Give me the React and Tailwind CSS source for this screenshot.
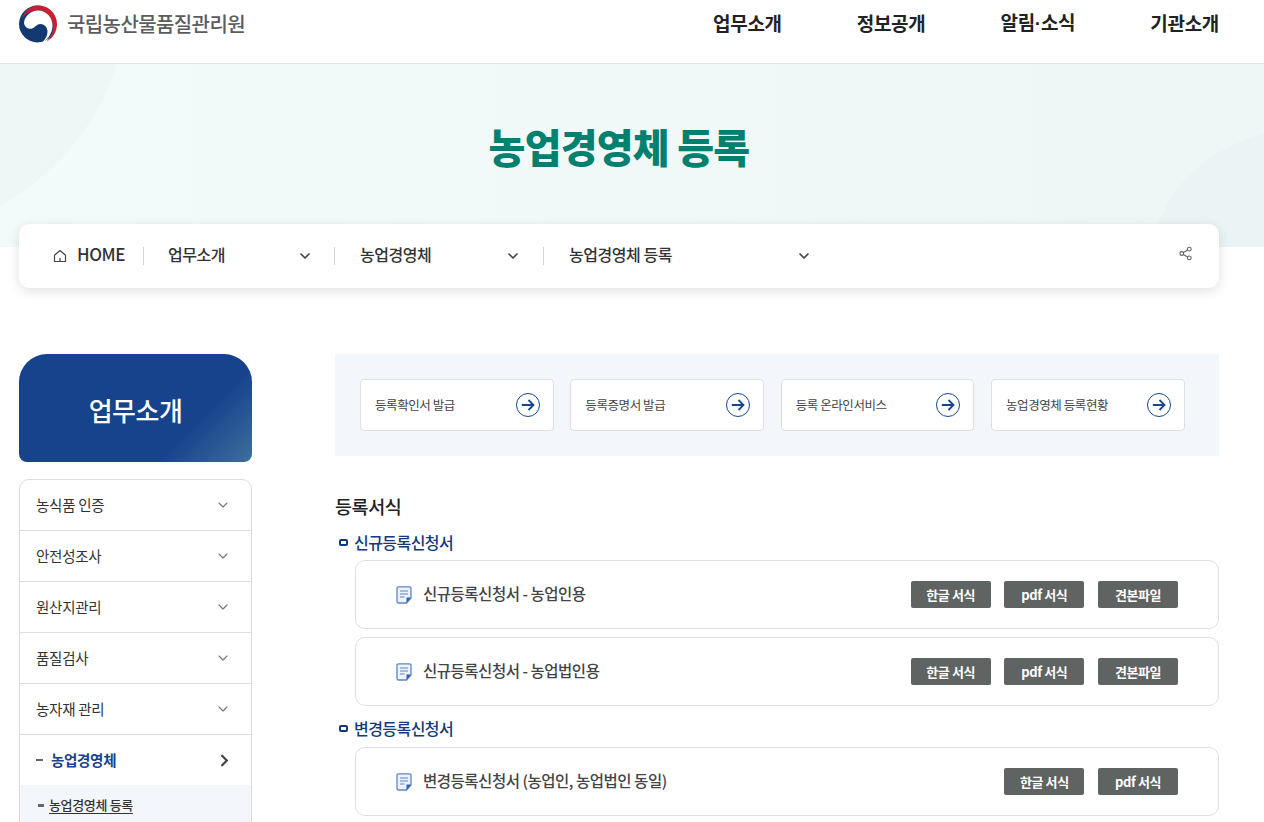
import React from "react";
import { ChevronDown, ChevronRight, Share2 } from "lucide-react";

function Logo() {
  return (
    <svg width="38" height="38" viewBox="0 0 38 38" className="shrink-0">
      <circle cx="18.500" cy="19" r="18.500" fill="#123a70" />
      <path d="M3 14C5 6 11.500.5 19.500.5 30 .5 38 9 38 19c0 8-4.500 14.500-11 18 4.500-4 7-9 7-14.500C34 13 27.500 5.500 18.500 5.500 11.500 5.500 5.500 9 3 14z" fill="#c8202f" />
      <path d="M5 17.500C6 10.500 12 5.500 19 5.500c8.500 0 14.500 7 14.500 15 0 6-3 11.500-7.500 15.500-.5.300-1.500.800-2.500 1 3-2.500 5-6.500 5-10.500 0-4.500-3.500-7.500-7-7.500-3 0-4.500 2-6.500 3.500-2.500 2-6 1.500-8-.5-1.200-1.300-2-2.700-2-4.500z" fill="#fff" />
    </svg>
  );
}

function HomeIcon() {
  return (
    <svg width="14" height="14" viewBox="0 0 14 14" fill="none" stroke="#444" strokeWidth="1.200" strokeLinejoin="round">
      <path d="M1.500 6.200 7 1.500l5.500 4.700v6.300h-11z" />
      <path d="M7 9v3.500" />
    </svg>
  );
}

function ArrowCircle() {
  return (
    <svg width="24" height="24" viewBox="0 0 24 24" fill="none" stroke="#17458c" className="shrink-0">
      <circle cx="12" cy="12" r="11.500" strokeWidth="1" />
      <path d="M5.800 12h11.700M12.500 7l5 5-5 5" strokeWidth="1.800" />
    </svg>
  );
}

function DocIcon() {
  return (
    <svg width="16" height="18" viewBox="0 0 16 18" fill="none" className="shrink-0">
      <path d="M2.500.8h11a1.500 1.500 0 0 1 1.500 1.500V12l-4.500 5h-8A1.500 1.500 0 0 1 1 15.500V2.300A1.500 1.500 0 0 1 2.500.8z" fill="#eef3fb" stroke="#5d86c9" strokeWidth="1.300" />
      <path d="M4 5h8M4 8h8M4 11h4.500" stroke="#5d86c9" strokeWidth="1.100" />
      <path d="M15 11.500h-4.500V17z" fill="#2f5fae" />
    </svg>
  );
}

function Crumb({ label, width, pad, right }) {
  return (
    <div className="flex items-center">
      <span className="w-px h-[18px] bg-[#d5d5d5]" />
      <div className="flex items-center justify-between text-[16px] font-medium text-[#333] tracking-[-0.45px]" style={{ width, paddingLeft: pad, paddingRight: right }}>
        <span className="-mt-[4px]">{label}</span>
        <ChevronDown size={16} strokeWidth={2.500} className="text-[#444]" />
      </div>
    </div>
  );
}

function QuickLink({ label }) {
  return (
    <a className="flex-1 h-[52px] flex items-center justify-between pl-[14px] pr-[13px] bg-white border border-[#e0e0e0] rounded-[4px] text-[12.500px] text-[#444] tracking-[-0.42px]">
      <span>{label}</span>
      <ArrowCircle />
    </a>
  );
}

function SideItem({ label }) {
  return (
    <div className="h-[51px] flex items-center justify-between pl-[16px] pr-[20px] border-b border-[#dddddd] text-[14.500px] text-[#333] tracking-[-0.25px]">
      <span className="-mt-[1px]">{label}</span>
      <ChevronDown size={16} strokeWidth={1.700} className="text-[#777]" />
    </div>
  );
}

function Btn({ label }) {
  return (
    <span className="w-[80px] h-[27px] flex items-center justify-center rounded-[2px] bg-[#5f6361] text-white text-[13px] font-bold tracking-[-0.4px]">{label}</span>
  );
}

function FormRow({ label, buttons }) {
  return (
    <div className="ml-[20px] h-[69px] flex items-center justify-between pl-[40px] pr-[40px] border border-[#e0e0e0] rounded-[10px] bg-white">
      <div className="flex items-center gap-[11px] text-[15.500px] font-medium text-[#444] tracking-[-0.48px]">
        <DocIcon />
        <span className="-mt-[2px]">{label}</span>
      </div>
      <div className="flex items-center gap-[13.700px]">
        {buttons.map((b) => <Btn key={b} label={b} />)}
      </div>
    </div>
  );
}

function SubHead({ label }) {
  return (
    <div className="flex items-center gap-[6px] h-[22px] pl-[4px] text-[16px] font-medium text-[#123a7a] tracking-[-0.55px]">
      <span className="w-[9px] h-[7px] border-2 border-[#123a7a] rounded-[2px]" />
      <span>{label}</span>
    </div>
  );
}

export default function App() {
  return (
    <div className="h-[822px] overflow-hidden bg-white font-['Noto_Sans_CJK_KR','Noto_Sans',sans-serif]">
      <header className="w-[1219px] h-[63px] flex items-center justify-between pl-[19px]">
        <div className="flex items-center gap-[10px] -mt-[15px]">
          <Logo />
          <span className="text-[20px] font-medium text-[#5a5d60] tracking-[-0.6px]">국립농산물품질관리원</span>
        </div>
        <nav className="flex items-center gap-[75px] -mt-[17px] text-[19px] font-bold text-[#222] tracking-[-0.3px]">
          <span>업무소개</span>
          <span>정보공개</span>
          <span>알림<span className="font-['Liberation_Sans']">·</span>소식</span>
          <span>기관소개</span>
        </nav>
      </header>

      <section className="relative h-[184px] overflow-hidden border-t border-[#e4e6e6] bg-[linear-gradient(90deg,#f2fbfa_0%,#f0f8f8_55%,#eef6f6_100%)]">
        <svg className="absolute inset-0" width="1264" height="184" viewBox="0 0 1264 184">
          <path d="M0 0H116C100 60 55 110 0 142z" fill="#edf7f6" />
          <path d="M1264 70C1205 85 1165 125 1150 184H1264z" fill="#ebf4f4" />
        </svg>
        <div className="relative w-[1238px] flex justify-center">
          <h1 className="mt-[52px] h-[60px] leading-[60px] text-[40px] font-black text-[#00806e] tracking-[-0.75px]">농업경영체 등록</h1>
        </div>
      </section>

      <div className="relative ml-[19px] w-[1200px] -mt-[23px] h-[64px] rounded-[10px] bg-white shadow-[0_3px_12px_rgba(0,0,0,0.12)] flex items-center pl-[34px] pr-[26px]">
        <div className="flex items-center gap-[10px] w-[90px] text-[17px] font-medium text-[#333] tracking-[-0.4px]">
          <HomeIcon />
          <span className="-mt-[4px]">HOME</span>
        </div>
        <Crumb label="업무소개" width={190} pad={24} right={21} />
        <Crumb label="농업경영체" width={208} pad={25} right={22} />
        <Crumb label="농업경영체 등록" width={283} pad={25} right={15} />
        <Share2 size={15} strokeWidth={1.800} className="ml-auto -mt-[6px] text-[#666]" />
      </div>

      <div className="flex gap-[83px] ml-[19px] w-[1200px] mt-[66px]">
        <aside className="w-[233px] shrink-0">
          <div className="h-[108px] pt-[3px] flex items-center justify-center rounded-tl-[28px] rounded-tr-[28px] rounded-bl-[8px] rounded-br-[8px] bg-[linear-gradient(135deg,#17438c_0%,#17438c_72%,#3f6f9c_100%)] text-white text-[26px] font-medium tracking-[-0.5px]">
            업무소개
          </div>
          <div className="mt-[17px] border border-[#dddddd] rounded-t-[10px]">
            <SideItem label="농식품 인증" />
            <SideItem label="안전성조사" />
            <SideItem label="원산지관리" />
            <SideItem label="품질검사" />
            <SideItem label="농자재 관리" />
            <div className="h-[50px] flex items-center justify-between pl-[16px] pr-[17px] text-[14.500px] font-bold text-[#17438c] tracking-[-0.3px]">
              <span className="flex items-center gap-[8px]">
                <span className="w-[7px] h-[2px] bg-[#666]" />
                농업경영체
              </span>
              <ChevronRight size={19} strokeWidth={2.800} className="text-[#444]" />
            </div>
            <div className="h-[60px] bg-[#f3f6fb] pl-[18px] pt-[10px] flex items-start gap-[5px] text-[13px] font-medium text-[#333] tracking-[-0.35px]">
              <span className="w-[6px] h-[3px] mt-[9px] bg-[#666]" />
              <span className="underline underline-offset-[3px]">농업경영체 등록</span>
            </div>
          </div>
        </aside>

        <main className="w-[884px] shrink-0">
          <div className="h-[102px] bg-[#f3f6fb] flex items-center gap-[16.800px] pl-[25px] pr-[34.500px]">
            <QuickLink label="등록확인서 발급" />
            <QuickLink label="등록증명서 발급" />
            <QuickLink label="등록 온라인서비스" />
            <QuickLink label="농업경영체 등록현황" />
          </div>
          <h2 className="mt-[36px] h-[28px] leading-[28px] text-[18.500px] font-medium text-[#222] tracking-[-0.4px]">등록서식</h2>
          <div className="mt-[11px]">
            <SubHead label="신규등록신청서" />
          </div>
          <div className="mt-[7px] flex flex-col gap-[8px]">
            <FormRow label="신규등록신청서 - 농업인용" buttons={["한글 서식", "pdf 서식", "견본파일"]} />
            <FormRow label="신규등록신청서 - 농업법인용" buttons={["한글 서식", "pdf 서식", "견본파일"]} />
          </div>
          <div className="mt-[11px]">
            <SubHead label="변경등록신청서" />
          </div>
          <div className="mt-[8px] flex flex-col gap-[8px]">
            <FormRow label="변경등록신청서 (농업인, 농업법인 동일)" buttons={["한글 서식", "pdf 서식"]} />
          </div>
        </main>
      </div>
    </div>
  );
}
